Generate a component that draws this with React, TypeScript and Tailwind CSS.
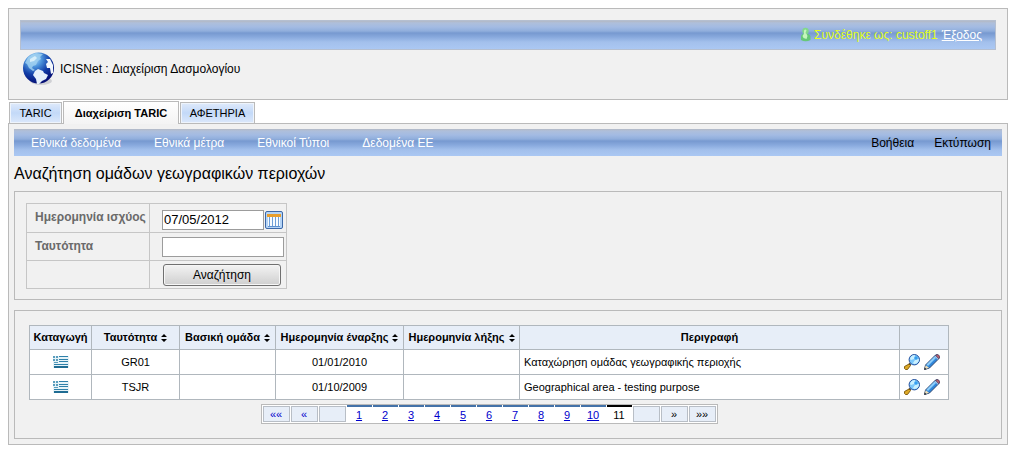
import { useState } from "react";
import clsx from "clsx";

const BAR =
  "bg-[linear-gradient(to_bottom,#b3b9c4_0px,#aebfdb_2px,#a3bbe3_6px,#90aedc_10px,#7799d0_12px,#88a9dd_16px,#a3c0ec_21px,#abc8f3_100%)]";

const tabs = [
  { label: "TARIC", active: false, width: "w-[53px]" },
  { label: "Διαχείριση TARIC", active: true, width: "w-[116px]" },
  { label: "ΑΦΕΤΗΡΙΑ", active: false, width: "w-[75px]" },
];

const menu = ["Εθνικά δεδομένα", "Εθνικά μέτρα", "Εθνικοί Τύποι", "Δεδομένα ΕΕ"];

const columns = [
  { label: "Καταγωγή", sortable: false, width: "w-[62px]" },
  { label: "Ταυτότητα", sortable: true, width: "w-[88px]" },
  { label: "Βασική ομάδα", sortable: true, width: "w-[96px]" },
  { label: "Ημερομηνία έναρξης", sortable: true, width: "w-[128px]" },
  { label: "Ημερομηνία λήξης", sortable: true, width: "w-[116px]" },
  { label: "Περιγραφή", sortable: false, width: "" },
  { label: "", sortable: false, width: "w-[49px]" },
];

const rows = [
  { id: "GR01", start: "01/01/2010", description: "Καταχώρηση ομάδας γεωγραφικής περιοχής" },
  { id: "TSJR", start: "01/10/2009", description: "Geographical area - testing purpose" },
];

const pages = [1, 2, 3, 4, 5, 6, 7, 8, 9, 10, 11];

function Globe() {
  return (
    <svg width="34" height="34" viewBox="0 0 34 34" aria-hidden="true">
      <defs>
        <radialGradient id="sea" cx="0.35" cy="0.2" r="0.85">
          <stop offset="0" stopColor="#b9e2fa" />
          <stop offset="0.3" stopColor="#4d94dc" />
          <stop offset="0.6" stopColor="#123fa8" />
          <stop offset="1" stopColor="#03086e" />
        </radialGradient>
      </defs>
      <ellipse cx="19" cy="29" rx="11" ry="4" fill="#cfd0d4" />
      <circle cx="16.500" cy="16" r="15.500" fill="url(#sea)" />
      <path d="M3 11Q6 3 14 1l7 1-3 3 1 2-3 2-2 4-3 1-1 2 3 2-2 1-4-3-2-4z" fill="#9fd0f0" opacity="0.85" />
      <path d="M8 7l5-3 2 2-3 3-4 1z" fill="#e4f5fd" opacity="0.8" />
      <path d="M13 19l3-2 5 2 1 2 4 2-2 4-4 2-3 3h-2l-1-5-3-4z" fill="#e6f1fb" />
      <path d="M24 7l4 0 3 6 0 8-2 1-1-6-3 0-1-4 2-2z" fill="#f3f8fd" />
    </svg>
  );
}

function UserIcon() {
  return (
    <svg width="12" height="16" viewBox="0 0 12 16" aria-hidden="true">
      <path d="M1 13V9.500Q1.200 6.500 5.500 6.500T10.500 9.500V13q-5 2.500-9.500 0z" fill="#66c878" />
      <circle cx="5.500" cy="4" r="3.200" fill="#82d98a" />
      <path d="M4 3.500q1.500-2 2.500 0l-1 2.500q1.500 1 2 3l-1 3-3-1-1-2q1-2 1.500-2z" fill="#c5f5bd" />
    </svg>
  );
}

function CalendarIcon() {
  return (
    <svg width="18" height="18" viewBox="0 0 18 18" aria-hidden="true">
      <rect x="0.500" y="0.500" width="17" height="17" rx="1.500" fill="#b5d4f6" stroke="#3c68a8" />
      <rect x="3" y="5" width="12" height="11" fill="#f7fbff" />
      <path d="M4.500 6v9M7.500 6v9M10.500 6v9M13.500 6v9" stroke="#6f9fd8" />
      <path d="M3 15.500h12" stroke="#5c8fcf" />
      <rect x="2" y="3" width="14" height="3" fill="#e89f2e" />
    </svg>
  );
}

function SortIcon() {
  return (
    <svg width="6" height="8" viewBox="0 0 6 8" aria-hidden="true">
      <path d="M3 0l3 3H0zM3 8L0 5h6z" fill="#000" />
    </svg>
  );
}

function GreekFlag() {
  return (
    <svg width="16" height="12" viewBox="0 0 16 12" className="mx-auto block" role="img" aria-label="Ελλάδα">
      <rect width="16" height="12" fill="#e6f3f8" />
      <path d="M6 0h9v1H6zM6 3h9v1H6zM6 5h9v1H6zM1 8h14v1H1z" fill="#2f81aa" />
      <path d="M1 10h14v2H1z" fill="#1f6c93" />
      <path d="M0 0h2v2H0zM3 0h2v2H3zM0 3h2v2H0zM3 3h2v2H3zM1 6h4v1H1z" fill="#5a9dbd" />
    </svg>
  );
}

function SearchIcon() {
  return (
    <svg width="16" height="16" viewBox="0 0 16 16" aria-hidden="true">
      <path d="M6.500 9.500L5 11" stroke="#333" strokeWidth="2" />
      <path d="M5 10l1.500 1.500-3 4H1.500l-1-1v-2z" fill="#dca827" stroke="#775307" strokeWidth="0.900" />
      <circle cx="10.300" cy="5.700" r="5.200" fill="#7cc8fb" stroke="#234f9d" />
      <path d="M6 5q1-4 5-4l-1 4-3 1zM11 6l4-1q0 4-4 5-2 0-2-1z" fill="#caf0ff" />
      <path d="M10 4l2-2 2 2-2 2z" fill="#369ff0" />
    </svg>
  );
}

function PencilIcon() {
  return (
    <svg width="16" height="16" viewBox="0 0 16 16" aria-hidden="true">
      <path d="M.5 15.500L1.500 11 11.500 1q2-1 3 0t1 3L5.500 14z" fill="#2f86da" stroke="#2a3d62" strokeWidth="0.900" />
      <path d="M2.500 10.500l8-8 1.500 1.500-8 8z" fill="#8ccdfa" />
      <path d="M.7 15.300L1.700 11.300 5 13.800z" fill="#f2dfb6" />
      <path d="M.3 15.700l.5-2.200 1.700 1.700z" fill="#222" />
      <path d="M11.800 1.500Q13.500.2 14.600 1.200t.8 2.400L14.500 4.500z" fill="#b7626f" stroke="#7b3e52" strokeWidth="0.600" />
      <path d="M10.700 2l3.200 3.200" stroke="#d9dfe8" />
    </svg>
  );
}

function Header() {
  return (
    <header className="h-[92px] border border-[#bababa] bg-[#f1f1f1] px-[11px] pt-[11px]">
      <div className={clsx(BAR, "flex h-[30px] items-center justify-end border border-[#b5bfd0] pr-[13px] text-[12px]")}>
        <div className="flex items-center gap-0.5">
          <UserIcon />
          <span className="text-[#e4ff1a]">Συνδέθηκε ως: custoff1</span>
        </div>
        <a href="#" className="ml-1 text-white underline">
          Έξοδος
        </a>
      </div>
      <div className="flex items-center gap-1 pt-0.5 pl-0.5 text-[12px]">
        <Globe />
        <h1>ICISNet : Διαχείριση Δασμολογίου</h1>
      </div>
    </header>
  );
}

function TabBar() {
  return (
    <nav className="flex h-[23px] items-end gap-px pl-px text-[11px]">
      {tabs.map((tab) => (
        <a
          key={tab.label}
          href="#"
          className={clsx(
            "flex items-center justify-center whitespace-nowrap border border-b-0 border-[#bababa]",
            tab.width,
            tab.active
              ? "relative z-10 -mb-px h-[23px] bg-linear-to-b from-white to-[#f4f4f4] font-bold"
              : "h-[21px] bg-linear-to-b from-[#dfeafb] via-[#c3d9f8] to-[#dce8fb] shadow-[inset_0_0_0_1px_#eef4fc]",
          )}
        >
          {tab.label}
        </a>
      ))}
    </nav>
  );
}

function SearchForm() {
  const [date, setDate] = useState("07/05/2012");
  const [code, setCode] = useState("");
  const label =
    "w-[123px] whitespace-nowrap border border-[#c6c6c6] py-0 pt-1 pr-0 pl-2 align-top text-left text-[12px] font-bold text-[#6a6a6a]";
  const field = "border border-[#c6c6c6] py-0 pr-0 pl-3 text-left align-middle";
  const input = "h-5 border border-[#9c9c9c] bg-white px-px text-[13px] outline-none";

  return (
    <form onSubmit={(e) => e.preventDefault()} className="h-[109px] border border-[#bababa] p-[11px]">
      <table className="w-[261px] table-fixed border-collapse">
        <tbody>
          <tr className="h-[29px]">
            <th scope="row" className={label}>
              <label htmlFor="valid-date">Ημερομηνία ισχύος</label>
            </th>
            <td className={field}>
              <div className="flex items-center gap-px pt-[3px]">
                <input
                  id="valid-date"
                  value={date}
                  onChange={(e) => setDate(e.target.value)}
                  className={clsx(input, "w-[102px]")}
                />
                <button type="button" aria-label="Ημερολόγιο">
                  <CalendarIcon />
                </button>
              </div>
            </td>
          </tr>
          <tr className="h-7">
            <th scope="row" className={label}>
              <label htmlFor="code">Ταυτότητα</label>
            </th>
            <td className={field}>
              <input
                id="code"
                value={code}
                onChange={(e) => setCode(e.target.value)}
                className={clsx(input, "block w-[122px]")}
              />
            </td>
          </tr>
          <tr className="h-7">
            <td className={label} />
            <td className={field}>
              <button
                type="submit"
                className="ml-px block h-[22px] w-[118px] rounded-[3px] border border-[#707070] bg-linear-to-b from-[#f3f3f3] to-[#cfcfcf] text-[12px] shadow-[inset_0_0_0_1px_#f6f6f6]"
              >
                Αναζήτηση
              </button>
            </td>
          </tr>
        </tbody>
      </table>
    </form>
  );
}

function ResultsTable() {
  const cell = "border border-[#b0b7bd] p-0 text-center";

  return (
    <table className="w-full table-fixed border-collapse bg-white text-[11px]">
      <thead>
        <tr className="h-6 bg-[#e7eef8]">
          {columns.map((col, i) => (
            <th key={i} scope="col" className={clsx(cell, col.width, "whitespace-nowrap font-bold")}>
              {col.sortable ? (
                <button type="button" className="inline-flex items-center gap-1">
                  {col.label}
                  <SortIcon />
                </button>
              ) : (
                col.label
              )}
            </th>
          ))}
        </tr>
      </thead>
      <tbody>
        {rows.map((row) => (
          <tr key={row.id} className="h-[25px]">
            <td className={cell}>
              <GreekFlag />
            </td>
            <td className={cell}>{row.id}</td>
            <td className={cell} />
            <td className={cell}>{row.start}</td>
            <td className={cell} />
            <td className="border border-[#b0b7bd] py-0 pr-0 pl-1">{row.description}</td>
            <td className={cell}>
              <div className="flex gap-1 pl-1">
                <button type="button" aria-label="Προβολή">
                  <SearchIcon />
                </button>
                <button type="button" aria-label="Επεξεργασία">
                  <PencilIcon />
                </button>
              </div>
            </td>
          </tr>
        ))}
      </tbody>
    </table>
  );
}

function Pager() {
  const step = "flex h-4 w-[27px] items-center justify-center border border-[#b8bec6] bg-[#e7eef8]";

  return (
    <nav className="mx-auto mt-1 flex h-5 w-fit items-center gap-px border border-[#bababa] bg-white px-px text-[11px]">
      <a href="#" className={clsx(step, "text-[#0000cc]")}>
        ««
      </a>
      <a href="#" className={clsx(step, "text-[#0000cc]")}>
        «
      </a>
      <span className={step} />
      {pages.map((page) =>
        page === 11 ? (
          <span key={page} className="flex h-[18px] w-[25px] items-center justify-center border-t-2 border-black">
            {page}
          </span>
        ) : (
          <a
            key={page}
            href="#"
            className="flex h-[18px] w-[25px] items-center justify-center border-t-2 border-[#4472a8] text-[#0000cc] underline"
          >
            {page}
          </a>
        ),
      )}
      <span className={step} />
      <span className={step}>»</span>
      <span className={step}>»»</span>
    </nav>
  );
}

export default function App() {
  return (
    <div className="min-h-screen bg-white p-2 font-['Liberation_Sans',Arial,sans-serif] text-black">
      <Header />
      <TabBar />
      <main className="border border-[#bababa] bg-[#f1f1f1] p-[5px]">
        <div className={clsx(BAR, "flex h-[27px] items-center justify-between pr-[11px] pl-[17px] text-[12px]")}>
          <div className="flex gap-[33px] text-white">
            {menu.map((item) => (
              <a key={item} href="#">
                {item}
              </a>
            ))}
          </div>
          <div className="flex gap-5">
            <a href="#">Βοήθεια</a>
            <a href="#">Εκτύπωση</a>
          </div>
        </div>
        <h2 className="flex h-[35px] items-center text-[16px]">Αναζήτηση ομάδων γεωγραφικών περιοχών</h2>
        <SearchForm />
        <section className="mt-[10px] border border-[#bababa] pt-[14px] pr-[52px] pb-[14px] pl-[14px]">
          <ResultsTable />
          <Pager />
        </section>
      </main>
    </div>
  );
}
